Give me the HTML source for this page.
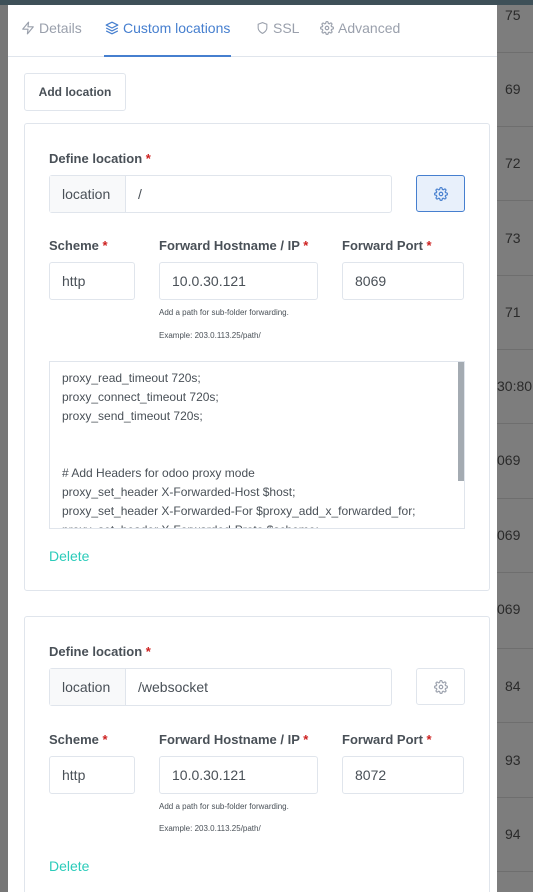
<!DOCTYPE html>
<html><head><meta charset="utf-8"><style>
*{box-sizing:border-box;margin:0;padding:0}
html,body{width:533px;height:892px;overflow:hidden}
body{background:#7d7d7d;font-family:"Liberation Sans",sans-serif;position:relative;color:#495057}
.a{position:absolute}
.topbar{left:0;top:0;width:533px;height:5px;background:#3e5058}
.rnum{left:505px;font-size:14px;color:#2a2a2a;line-height:16px}
.rline{left:497px;width:36px;height:1px;background:#6e6e6e}
.modal{left:8px;top:5px;width:489px;height:887px;background:#fff}
.tab{top:20px;font-size:14px;color:#9aa0ac;display:flex;align-items:center;gap:4px}
.card{left:24px;width:466px;border:1px solid #e0e5ec;border-radius:3px;background:#fff}
.lbl{font-size:13px;font-weight:bold;color:#495057}
.lbl b{color:#cd201f}
.inp{border:1px solid #e0e5ec;border-radius:3px;background:#fff;font-size:14px;color:#495057;padding-left:12px;display:flex;align-items:center}
.help{font-size:8px;color:#495057}
.del{font-size:14px;color:#2bcbba}
</style></head><body>
<div class="a topbar"></div>
<div class="a" style="left:0;top:5px;width:8px;height:887px;background:#777"></div>
<div class="a rnum" style="top:7px">75</div>
<div class="a rline" style="top:52px"></div>
<div class="a rnum" style="top:81px">69</div>
<div class="a rline" style="top:126px"></div>
<div class="a rnum" style="top:155px">72</div>
<div class="a rline" style="top:200px"></div>
<div class="a rnum" style="top:230px">73</div>
<div class="a rline" style="top:275px"></div>
<div class="a rnum" style="top:304px">71</div>
<div class="a rline" style="top:349px"></div>
<div class="a rnum" style="top:378px;left:497px">30:80</div>
<div class="a rline" style="top:423px"></div>
<div class="a rnum" style="top:452px;left:497px">069</div>
<div class="a rline" style="top:498px"></div>
<div class="a rnum" style="top:527px;left:497px">069</div>
<div class="a rline" style="top:572px"></div>
<div class="a rnum" style="top:601px;left:497px">069</div>
<div class="a rline" style="top:648px"></div>
<div class="a rnum" style="top:678px">84</div>
<div class="a rline" style="top:722px"></div>
<div class="a rnum" style="top:752px">93</div>
<div class="a rline" style="top:797px"></div>
<div class="a rnum" style="top:826px">94</div>
<div class="a rline" style="top:871px"></div>

<div class="a modal"></div>
<div class="a" style="left:8px;top:56px;width:489px;height:1px;background:#e0e5ec"></div>
<div class="a tab" style="left:21px"><svg width="14" height="14" viewBox="0 0 24 24" fill="none" stroke="#9aa0ac" stroke-width="2" stroke-linejoin="round"><path d="M13 2L3 14h9l-1 8 10-12h-9l1-8z"/></svg>Details</div>
<div class="a tab" style="left:105px;color:#467fcf"><svg width="14" height="14" viewBox="0 0 24 24" fill="none" stroke="#467fcf" stroke-width="2" stroke-linejoin="round"><path d="M12 2L2 7l10 5 10-5-10-5zM2 17l10 5 10-5M2 12l10 5 10-5"/></svg>Custom locations</div>
<div class="a" style="left:104px;top:55px;width:127px;height:2px;background:#467fcf"></div>
<div class="a tab" style="left:256px"><svg width="13" height="14" viewBox="0 0 24 24" fill="none" stroke="#9aa0ac" stroke-width="2"><path d="M12 22s8-4 8-10V5l-8-3-8 3v7c0 6 8 10 8 10z"/></svg>SSL</div>
<div class="a tab" style="left:320px"><svg width="14" height="14" viewBox="0 0 24 24" fill="none" stroke="#9aa0ac" stroke-width="2"><circle cx="12" cy="12" r="3"/><path d="M19.4 15a1.7 1.7 0 0 0 .3 1.8l.1.1a2 2 0 1 1-2.8 2.8l-.1-.1a1.7 1.7 0 0 0-1.8-.3 1.7 1.7 0 0 0-1 1.5V21a2 2 0 1 1-4 0v-.1a1.7 1.7 0 0 0-1.1-1.5 1.7 1.7 0 0 0-1.8.3l-.1.1a2 2 0 1 1-2.8-2.8l.1-.1a1.7 1.7 0 0 0 .3-1.8 1.7 1.7 0 0 0-1.5-1H3a2 2 0 1 1 0-4h.1a1.7 1.7 0 0 0 1.5-1.1 1.7 1.7 0 0 0-.3-1.8l-.1-.1a2 2 0 1 1 2.8-2.8l.1.1a1.7 1.7 0 0 0 1.8.3H9a1.7 1.7 0 0 0 1-1.5V3a2 2 0 1 1 4 0v.1a1.7 1.7 0 0 0 1 1.5 1.7 1.7 0 0 0 1.8-.3l.1-.1a2 2 0 1 1 2.8 2.8l-.1.1a1.7 1.7 0 0 0-.3 1.8V9a1.7 1.7 0 0 0 1.5 1H21a2 2 0 1 1 0 4h-.1a1.7 1.7 0 0 0-1.5 1z"/></svg>Advanced</div>

<div class="a" style="left:24px;top:73px;width:102px;height:38px;border:1px solid #e0e5ec;border-radius:3px;font-size:12px;font-weight:bold;color:#495057;display:flex;align-items:center;justify-content:center">Add location</div>

<!-- card 1 -->
<div class="a card" style="top:123px;height:468px"></div>
<div class="a lbl" style="left:49px;top:151px">Define location <b>*</b></div>
<div class="a inp" style="left:49px;top:175px;width:343px;height:38px;padding:0"><div style="width:76px;height:100%;background:#f8f9fa;border-right:1px solid #e0e5ec;display:flex;align-items:center;padding-left:12px">location</div><div style="padding-left:12px">/</div></div>
<div class="a" style="left:416px;top:175px;width:49px;height:37px;border:1px solid #467fcf;border-radius:3px;background:#e8f0fb;display:flex;align-items:center;justify-content:center"><svg width="14" height="14" viewBox="0 0 24 24" fill="none" stroke="#467fcf" stroke-width="2"><circle cx="12" cy="12" r="3"/><path d="M19.4 15a1.7 1.7 0 0 0 .3 1.8l.1.1a2 2 0 1 1-2.8 2.8l-.1-.1a1.7 1.7 0 0 0-1.8-.3 1.7 1.7 0 0 0-1 1.5V21a2 2 0 1 1-4 0v-.1a1.7 1.7 0 0 0-1.1-1.5 1.7 1.7 0 0 0-1.8.3l-.1.1a2 2 0 1 1-2.8-2.8l.1-.1a1.7 1.7 0 0 0 .3-1.8 1.7 1.7 0 0 0-1.5-1H3a2 2 0 1 1 0-4h.1a1.7 1.7 0 0 0 1.5-1.1 1.7 1.7 0 0 0-.3-1.8l-.1-.1a2 2 0 1 1 2.8-2.8l.1.1a1.7 1.7 0 0 0 1.8.3H9a1.7 1.7 0 0 0 1-1.5V3a2 2 0 1 1 4 0v.1a1.7 1.7 0 0 0 1 1.5 1.7 1.7 0 0 0 1.8-.3l.1-.1a2 2 0 1 1 2.8 2.8l-.1.1a1.7 1.7 0 0 0-.3 1.8V9a1.7 1.7 0 0 0 1.5 1H21a2 2 0 1 1 0 4h-.1a1.7 1.7 0 0 0-1.5 1z"/></svg></div>
<div class="a lbl" style="left:49px;top:238px">Scheme <b>*</b></div>
<div class="a lbl" style="left:159px;top:238px">Forward Hostname / IP <b>*</b></div>
<div class="a lbl" style="left:342px;top:238px">Forward Port <b>*</b></div>
<div class="a inp" style="left:49px;top:262px;width:86px;height:38px">http</div>
<div class="a inp" style="left:159px;top:262px;width:159px;height:38px">10.0.30.121</div>
<div class="a inp" style="left:342px;top:262px;width:122px;height:38px">8069</div>
<div class="a help" style="left:159px;top:308px">Add a path for sub-folder forwarding.</div>
<div class="a help" style="left:159px;top:331px">Example: 203.0.113.25/path/</div>
<div class="a" style="left:49px;top:361px;width:416px;height:168px;border:1px solid #e0e5ec;overflow:hidden;font-size:12px;line-height:19px;color:#495057;padding:7px 0 0 12px">proxy_read_timeout 720s;<br>proxy_connect_timeout 720s;<br>proxy_send_timeout 720s;<br><br><br># Add Headers for odoo proxy mode<br>proxy_set_header X-Forwarded-Host $host;<br>proxy_set_header X-Forwarded-For $proxy_add_x_forwarded_for;<br>proxy_set_header X-Forwarded-Proto $scheme;</div>
<div class="a" style="left:458px;top:362px;width:6px;height:119px;background:#a4abb2"></div>
<div class="a del" style="left:49px;top:548px">Delete</div>

<!-- card 2 -->
<div class="a card" style="top:616px;height:300px"></div>
<div class="a lbl" style="left:49px;top:644px">Define location <b>*</b></div>
<div class="a inp" style="left:49px;top:668px;width:343px;height:38px;padding:0"><div style="width:76px;height:100%;background:#f8f9fa;border-right:1px solid #e0e5ec;display:flex;align-items:center;padding-left:12px">location</div><div style="padding-left:12px">/websocket</div></div>
<div class="a" style="left:416px;top:668px;width:49px;height:37px;border:1px solid #e0e5ec;border-radius:3px;display:flex;align-items:center;justify-content:center"><svg width="14" height="14" viewBox="0 0 24 24" fill="none" stroke="#9aa0ac" stroke-width="2"><circle cx="12" cy="12" r="3"/><path d="M19.4 15a1.7 1.7 0 0 0 .3 1.8l.1.1a2 2 0 1 1-2.8 2.8l-.1-.1a1.7 1.7 0 0 0-1.8-.3 1.7 1.7 0 0 0-1 1.5V21a2 2 0 1 1-4 0v-.1a1.7 1.7 0 0 0-1.1-1.5 1.7 1.7 0 0 0-1.8.3l-.1.1a2 2 0 1 1-2.8-2.8l.1-.1a1.7 1.7 0 0 0 .3-1.8 1.7 1.7 0 0 0-1.5-1H3a2 2 0 1 1 0-4h.1a1.7 1.7 0 0 0 1.5-1.1 1.7 1.7 0 0 0-.3-1.8l-.1-.1a2 2 0 1 1 2.8-2.8l.1.1a1.7 1.7 0 0 0 1.8.3H9a1.7 1.7 0 0 0 1-1.5V3a2 2 0 1 1 4 0v.1a1.7 1.7 0 0 0 1 1.5 1.7 1.7 0 0 0 1.8-.3l.1-.1a2 2 0 1 1 2.8 2.8l-.1.1a1.7 1.7 0 0 0-.3 1.8V9a1.7 1.7 0 0 0 1.5 1H21a2 2 0 1 1 0 4h-.1a1.7 1.7 0 0 0-1.5 1z"/></svg></div>
<div class="a lbl" style="left:49px;top:732px">Scheme <b>*</b></div>
<div class="a lbl" style="left:159px;top:732px">Forward Hostname / IP <b>*</b></div>
<div class="a lbl" style="left:342px;top:732px">Forward Port <b>*</b></div>
<div class="a inp" style="left:49px;top:756px;width:86px;height:38px">http</div>
<div class="a inp" style="left:159px;top:756px;width:159px;height:38px">10.0.30.121</div>
<div class="a inp" style="left:342px;top:756px;width:122px;height:38px">8072</div>
<div class="a help" style="left:159px;top:802px">Add a path for sub-folder forwarding.</div>
<div class="a help" style="left:159px;top:824px">Example: 203.0.113.25/path/</div>
<div class="a del" style="left:49px;top:858px">Delete</div>
</body></html>
